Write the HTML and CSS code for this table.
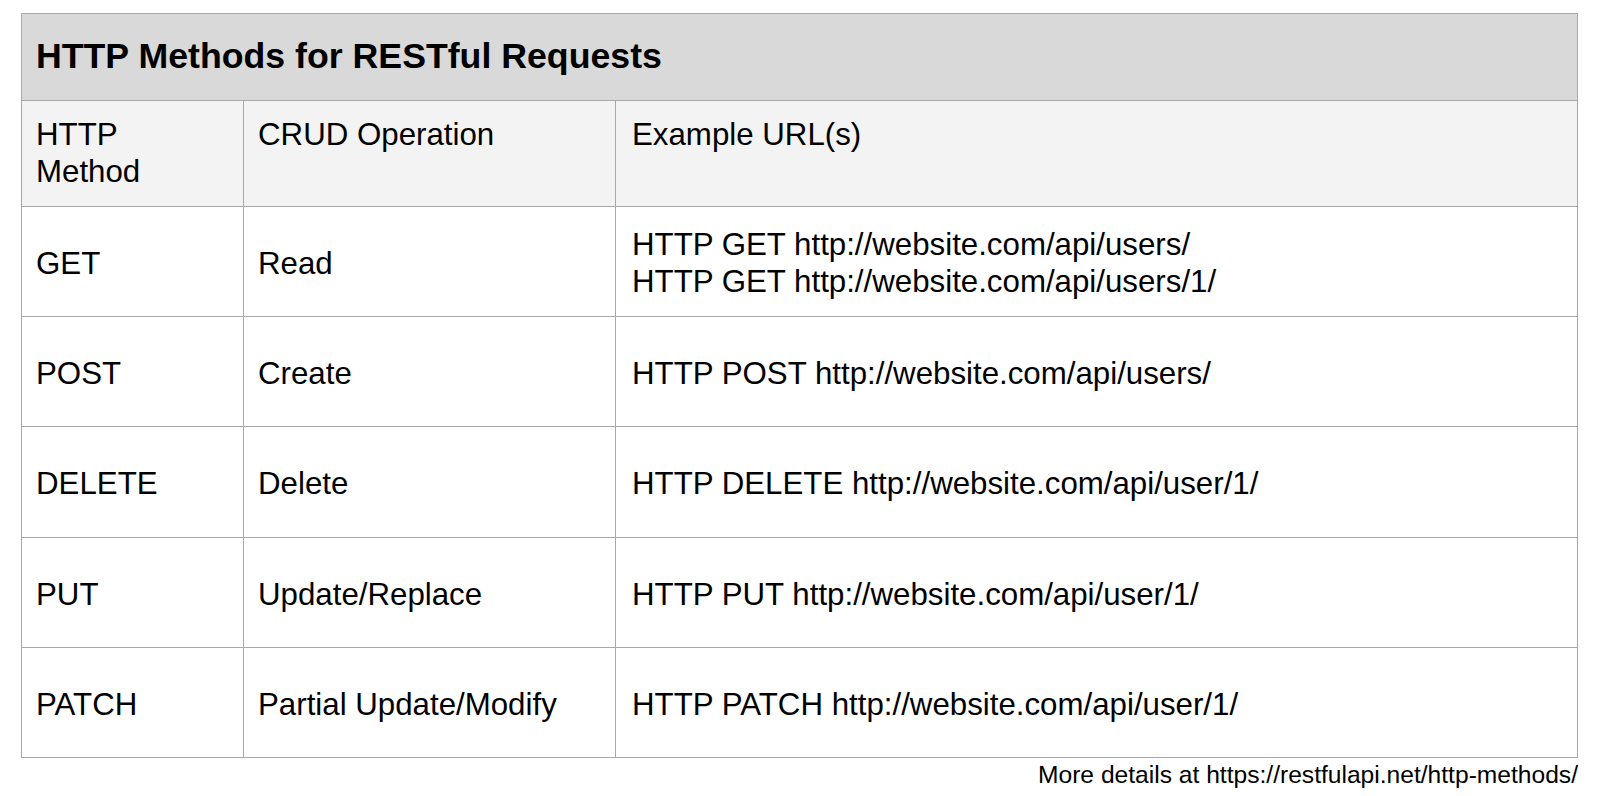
FILE: index.html
```html
<!DOCTYPE html>
<html lang="en">
<head>
<meta charset="utf-8">
<title>HTTP Methods for RESTful Requests</title>
<link rel="stylesheet" href="styles.css">
</head>
<body>
<div class="page">
  <div class="grid">
    <div class="title">HTTP Methods for RESTful Requests</div>

    <div class="cell head c1">HTTP<br>Method</div>
    <div class="cell head c2">CRUD Operation</div>
    <div class="cell head c3">Example URL(s)</div>

    <div class="cell data c1">GET</div>
    <div class="cell data c2">Read</div>
    <div class="cell data c3">HTTP GET http://website.com/api/users/<br>HTTP GET http://website.com/api/users/1/</div>

    <div class="cell data c1">POST</div>
    <div class="cell data c2">Create</div>
    <div class="cell data c3">HTTP POST http://website.com/api/users/</div>

    <div class="cell data c1">DELETE</div>
    <div class="cell data c2">Delete</div>
    <div class="cell data c3">HTTP DELETE http://website.com/api/user/1/</div>

    <div class="cell data c1">PUT</div>
    <div class="cell data c2">Update/Replace</div>
    <div class="cell data c3">HTTP PUT http://website.com/api/user/1/</div>

    <div class="cell data c1">PATCH</div>
    <div class="cell data c2">Partial Update/Modify</div>
    <div class="cell data c3">HTTP PATCH http://website.com/api/user/1/</div>
  </div>
  <div class="footer">More details at https://restfulapi.net/http-methods/</div>
</div>
</body>
</html>
```

FILE: styles.css
```css
html, body {
  margin: 0;
  padding: 0;
  background: #ffffff;
}

body {
  font-family: "Liberation Sans", Arial, sans-serif;
  color: #000000;
}

.page {
  width: 1557px;
  padding: 13px 0 0 21px;
}

.grid {
  display: grid;
  grid-template-columns: 221px 371px 961px;
  grid-template-rows: 86px 105px 109px 109px 110px 109px 109px;
  gap: 1px;
  padding: 1px;
  background: #a8a8a8;
}

.title {
  grid-column: 1 / -1;
  background: #d9d9d9;
  font-weight: bold;
  font-size: 35.7px;
  line-height: 1;
  padding-left: 14px;
  display: flex;
  align-items: center;
}

.cell {
  font-size: 31.25px;
  line-height: 37px;
  padding-left: 14px;
}

.cell.c3 {
  padding-left: 16px;
}

.head {
  background: #f3f3f3;
  padding-top: 15px;
}

.data {
  background: #ffffff;
  display: flex;
  align-items: center;
  padding-top: 3px;
}

.footer {
  text-align: right;
  font-size: 24.6px;
  line-height: 28px;
  margin-top: 3px;
  padding-right: 0;
}
```
